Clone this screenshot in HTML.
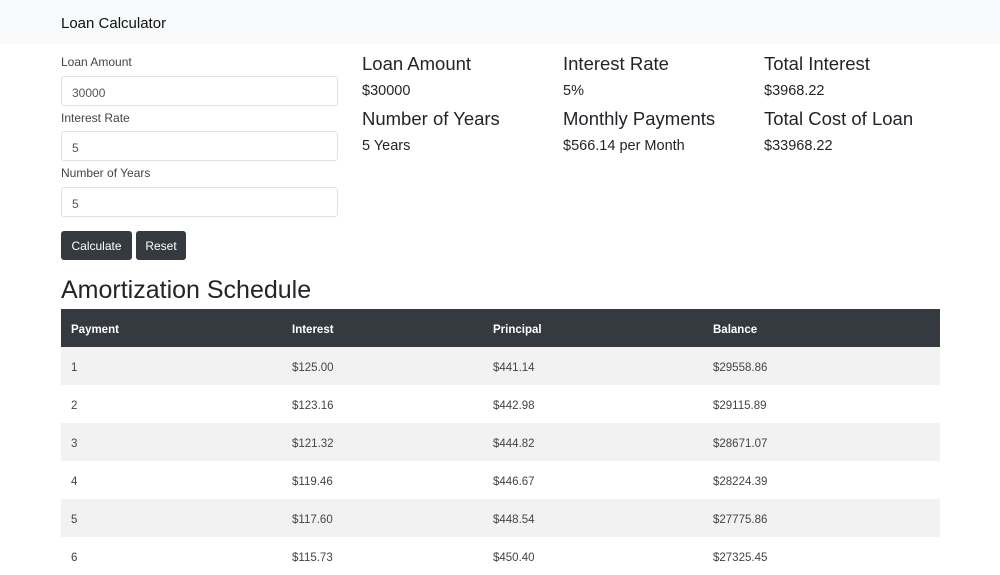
<!DOCTYPE html>
<html><head><style>
*{box-sizing:border-box;margin:0;padding:0}
body{width:1000px;height:570px;overflow:hidden;font-family:"Liberation Sans",sans-serif;color:#212529;background:#fff;position:relative}
.nav{position:absolute;left:0;top:0;width:1000px;height:44px;background:#f8f9fa}
.nav span{position:absolute;left:61px;top:15px;font-size:15px;color:#111}
.lbl{position:absolute;left:61px;font-size:12px;color:#444}
.inp{position:absolute;left:61px;width:277px;height:30px;border:1px solid #dee2e6;border-radius:3px;font-size:12px;color:#555;padding:9px 0 0 10px}
.btn{position:absolute;top:231px;height:29px;background:#343a40;color:#fff;border-radius:3px;font-size:12px;padding:8px 0 0 0;text-align:center}
.h{position:absolute;font-size:18.5px;color:#212529}
.v{position:absolute;font-size:14.5px;color:#212529}
h2{position:absolute;left:61px;top:276px;font-size:25px;font-weight:normal}
table{position:absolute;left:61px;top:309px;width:879px;border-collapse:collapse;font-size:11.5px}
th{background:#343a40;color:#fff;text-align:left;height:38px;padding:3px 0 0 10px;font-weight:bold;font-size:11.5px}
td{height:38px;padding:3px 0 0 10px;color:#444}
tbody tr:nth-child(odd) td{background:#f2f2f2}
</style></head><body>
<div class="nav"><span>Loan Calculator</span></div>
<div class="lbl" style="top:55px">Loan Amount</div>
<div class="inp" style="top:76px">30000</div>
<div class="lbl" style="top:111px">Interest Rate</div>
<div class="inp" style="top:131px">5</div>
<div class="lbl" style="top:166px">Number of Years</div>
<div class="inp" style="top:187px">5</div>
<div class="btn" style="left:61px;width:71px">Calculate</div>
<div class="btn" style="left:136px;width:50px">Reset</div>
<div class="h" style="left:362px;top:53px">Loan Amount</div>
<div class="v" style="left:362px;top:83px">$30000</div>
<div class="h" style="left:362px;top:108px">Number of Years</div>
<div class="v" style="left:362px;top:138px">5 Years</div>
<div class="h" style="left:563px;top:53px">Interest Rate</div>
<div class="v" style="left:563px;top:83px">5%</div>
<div class="h" style="left:563px;top:108px">Monthly Payments</div>
<div class="v" style="left:563px;top:138px">$566.14 per Month</div>
<div class="h" style="left:764px;top:53px">Total Interest</div>
<div class="v" style="left:764px;top:83px">$3968.22</div>
<div class="h" style="left:764px;top:108px">Total Cost of Loan</div>
<div class="v" style="left:764px;top:138px">$33968.22</div>
<h2>Amortization Schedule</h2>
<table>
<thead><tr><th style="width:221px">Payment</th><th style="width:201px">Interest</th><th style="width:220px">Principal</th><th>Balance</th></tr></thead>
<tbody>
<tr><td>1</td><td>$125.00</td><td>$441.14</td><td>$29558.86</td></tr>
<tr><td>2</td><td>$123.16</td><td>$442.98</td><td>$29115.89</td></tr>
<tr><td>3</td><td>$121.32</td><td>$444.82</td><td>$28671.07</td></tr>
<tr><td>4</td><td>$119.46</td><td>$446.67</td><td>$28224.39</td></tr>
<tr><td>5</td><td>$117.60</td><td>$448.54</td><td>$27775.86</td></tr>
<tr><td>6</td><td>$115.73</td><td>$450.40</td><td>$27325.45</td></tr>
</tbody>
</table>
</body></html>
